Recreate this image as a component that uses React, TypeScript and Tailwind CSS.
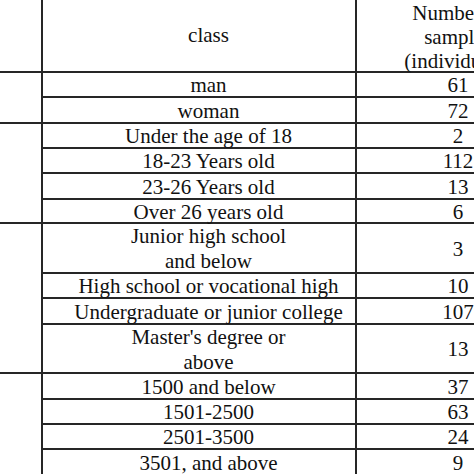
// Sample-profile table (cropped view)

type Row = { label: string[]; count: string }
type Group = { rows: Row[]; last?: boolean }

const GROUPS: Group[] = [
  { rows: [{ label: ['man'], count: '61' }, { label: ['woman'], count: '72' }] },
  {
    rows: [
      { label: ['Under the age of 18'], count: '2' },
      { label: ['18-23 Years old'], count: '112' },
      { label: ['23-26 Years old'], count: '13' },
      { label: ['Over 26 years old'], count: '6' },
    ],
  },
  {
    rows: [
      { label: ['Junior high school', 'and below'], count: '3' },
      { label: ['High school or vocational high'], count: '10' },
      { label: ['Undergraduate or junior college'], count: '107' },
      { label: ["Master's degree or", 'above'], count: '13' },
    ],
  },
  {
    rows: [
      { label: ['1500 and below'], count: '37' },
      { label: ['1501-2500'], count: '63' },
      { label: ['2501-3500'], count: '24' },
      { label: ['3501, and above'], count: '9' },
    ],
    last: true,
  },
]

const SPAN = ['', '', 'row-span-2', 'row-span-3', 'row-span-4']

export default function App() {
  return (
    <div className="w-[474px] h-[474px] overflow-hidden bg-white text-[#111] font-['Liberation_Serif',_serif] text-[21px] leading-[25px]">
      <div className="grid w-max grid-cols-[41px_314px_204px] grid-rows-[73px_25px_26px_25px_25px_26px_24px_50px_25px_26px_49px_26px_25px_25px_25px]">
        {/* header */}
        <div className="border-b-2 border-[#262626]" />
        <div className="flex items-center justify-center pl-[19px] border-l-2 border-b-2 border-[#262626]">
          class
        </div>
        <div className="flex flex-col items-center justify-center pt-[3px] leading-[24px] border-l-2 border-b-2 border-[#262626] text-center">
          <span>Number of</span>
          <span>samples</span>
          <span>(individuals)</span>
        </div>

        {GROUPS.map((g, gi) => (
          <GroupRows key={gi} group={g} />
        ))}
      </div>
    </div>
  )
}

function GroupRows({ group }: { group: Group }) {
  const n = group.rows.length
  return (
    <>
      {group.rows.map((r, i) => {
        const bottom = !(group.last && i === n - 1)
        const line = bottom ? 'border-b-2' : ''
        return [
          i === 0 ? (
            <div key="g" className={`${SPAN[n]} ${group.last ? '' : 'border-b-2'} border-[#262626]`} />
          ) : null,
          <div
            key={`l${i}`}
            className={`flex flex-col items-center justify-center pl-[19px] pt-[2px] border-l-2 ${line} border-[#262626] whitespace-nowrap`}
          >
            {r.label.map((t) => (
              <span key={t}>{t}</span>
            ))}
          </div>,
          <div
            key={`c${i}`}
            className={`flex items-center justify-center pt-[2px] border-l-2 ${line} border-[#262626]`}
          >
            {r.count}
          </div>,
        ]
      })}
    </>
  )
}
